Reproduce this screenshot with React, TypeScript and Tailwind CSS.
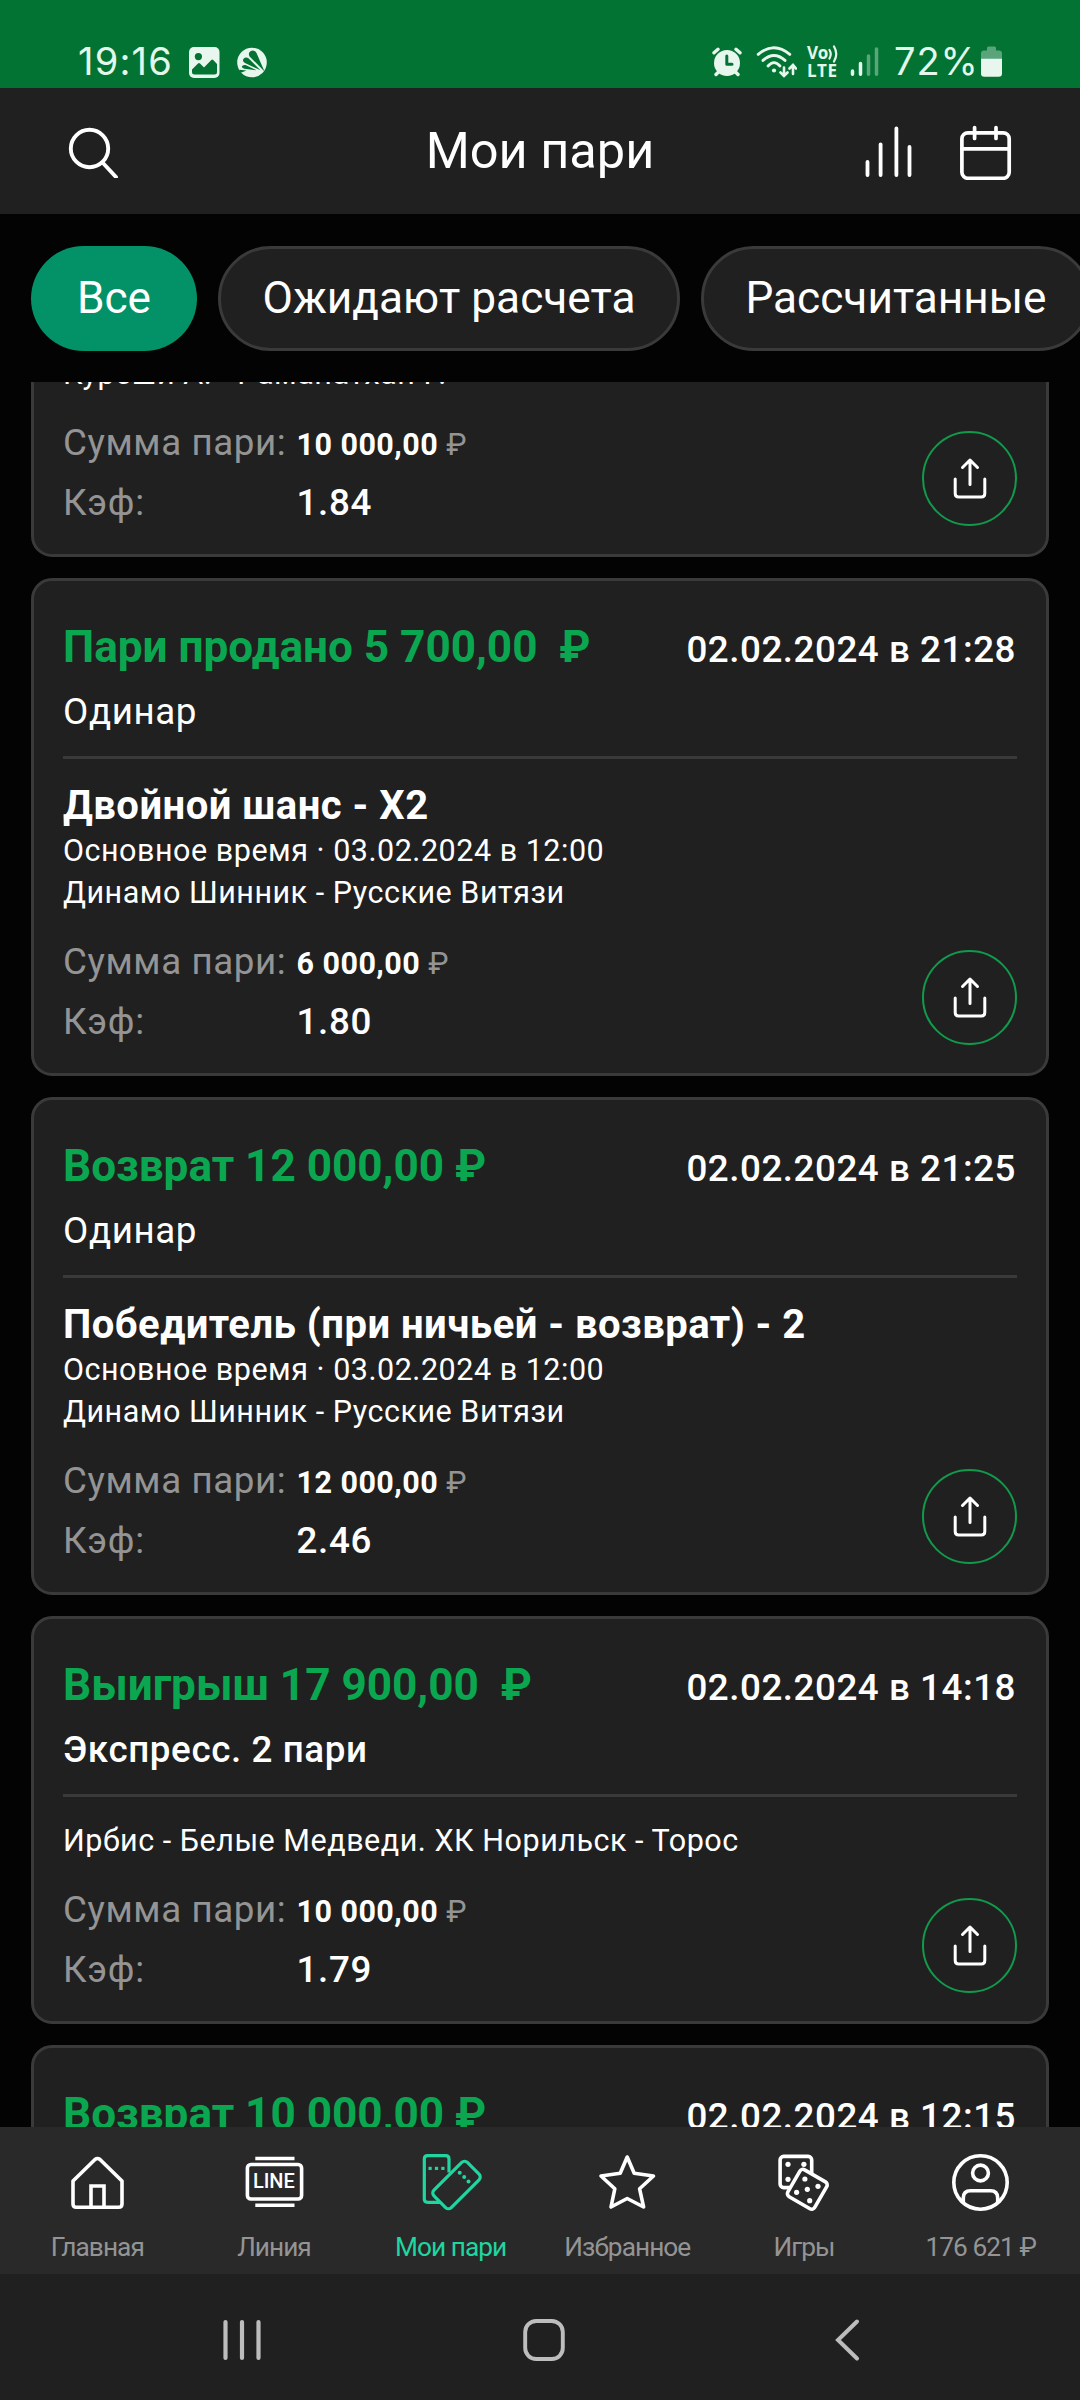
import type { ReactNode } from "react";

type Bet = {
  status?: string;
  date?: string;
  kind?: string;
  kindBold?: boolean;
  title?: string;
  lines: string[];
  sum: string;
  odds: string;
};

const bets: Bet[] = [
  { lines: ["Куреши А. - Раманатхан Р."], sum: "10 000,00", odds: "1.84" },
  {
    status: "Пари продано 5 700,00  ₽",
    date: "02.02.2024 в 21:28",
    kind: "Одинар",
    title: "Двойной шанс - X2",
    lines: ["Основное время · 03.02.2024 в 12:00", "Динамо Шинник - Русские Витязи"],
    sum: "6 000,00",
    odds: "1.80",
  },
  {
    status: "Возврат 12 000,00 ₽",
    date: "02.02.2024 в 21:25",
    kind: "Одинар",
    title: "Победитель (при ничьей - возврат) - 2",
    lines: ["Основное время · 03.02.2024 в 12:00", "Динамо Шинник - Русские Витязи"],
    sum: "12 000,00",
    odds: "2.46",
  },
  {
    status: "Выигрыш 17 900,00  ₽",
    date: "02.02.2024 в 14:18",
    kind: "Экспресс. 2 пари",
    kindBold: true,
    lines: ["Ирбис - Белые Медведи. ХК Норильск - Торос"],
    sum: "10 000,00",
    odds: "1.79",
  },
];

function StatusBar() {
  return (
    <div className="flex h-[88px] shrink-0 items-start bg-[#027333] pt-[46px] pl-[78px] font-['Inter'] text-[38px] leading-[32px] text-[#e3f8ea]">
      <span className="-mt-px w-[111px] tracking-[1.2px]">19:16</span>
      <svg className="h-8 w-[31px]" viewBox="0 0 31 32">
        <rect x="0" y="1" width="30.5" height="31" rx="5" fill="#e8f7ee" />
        <circle cx="9.4" cy="10.6" r="3.6" fill="#027333" />
        <path d="M3 23.5 L9 17.5 Q10 16.6 11 17.5 L15 21.5 L22.3 14 Q23.3 13.2 24.2 14 L28 18 V26 Q28 28.5 25.5 28.5 H5.5 Q3 28.5 3 26Z" fill="#027333" />
      </svg>
      <svg className="ml-[17px] h-8 w-[30px]" viewBox="0 0 30 32">
        <circle cx="15" cy="16.5" r="14.8" fill="#e8f7ee" />
        <g fill="#027333">
          <path d="M27.5 25.5 L19.5 7 Q17.500 3.600 13.800 5 Q10.600 7 12.600 10.400Z" />
          <path d="M23.500 24.300 L11.500 12.200 Q8.500 10.600 6.400 13 Q5 15.600 8 17Z" />
          <path d="M19.500 24.300 L8.500 19 Q5.500 18.600 4.800 20.600 Q5 22.400 7.500 22.700Z" />
          <path d="M9.500 24.400 L2.500 23.800 L1.500 26.500 L4.500 26.500Z" />
        </g>
      </svg>
      <div className="ml-auto flex items-start pr-[78px]">
        <svg className="h-8 w-[30px]" viewBox="0 0 30 32">
          <g stroke="#e8f7ee" strokeWidth="3.4" strokeLinecap="round">
            <path d="M2 6.8 L6 3.3 M28 6.8 L24 3.3 M4 28.5 L7 25.5 M26 28.5 L23 25.5" />
          </g>
          <circle cx="15" cy="17" r="13" fill="#e8f7ee" />
          <path d="M14.8 10 V18.2 H20" fill="none" stroke="#027333" strokeWidth="3" strokeLinecap="round" strokeLinejoin="round" />
        </svg>
        <svg className="ml-[13px] h-8 w-[42px]" viewBox="0 0 42 32">
          <g fill="none" stroke="#e8f7ee" strokeWidth="2.9" strokeLinecap="round">
            <path d="M3.2 8.4 Q19 -5 34.8 8.4" />
            <path d="M8 14.4 Q19 4.4 30 14.4" />
            <path d="M13 20 Q19 13.2 25 20" />
            <path d="M29 21.5 V29.5 M25.5 26.5 L29 30 L32.5 26.5 M38 28 V19.5 M34.5 22.5 L38 19 L41 22.5" strokeWidth="2.6" />
          </g>
          <circle cx="19" cy="24.5" r="2.1" fill="#e8f7ee" />
        </svg>
        <div className="ml-[10px] flex w-[32px] flex-col font-['Open_Sans'] text-[17px] leading-[16px] font-bold text-[#e3f8ea]">
          <div className="flex h-[17px] items-start">
            <span className="-mt-px tracking-[-0.4px]">Vo</span>
            <svg className="-mt-px h-[18px] w-[10px]" viewBox="0 0 10 18">
              <path d="M1.5 5 Q4 9 1.5 13.5 M6 1.5 Q10.5 9 6 16.5" fill="none" stroke="#e8f7ee" strokeWidth="2.2" strokeLinecap="round" />
            </svg>
          </div>
          <span className="tracking-[0.5px]">LTE</span>
        </div>
        <svg className="ml-[11px] h-8 w-[30px]" viewBox="0 0 30 32">
          <g stroke="#e8f7ee" strokeWidth="3.5" strokeLinecap="round">
            <path d="M2.5 25 V28.3 M10.5 17.5 V28.3" />
            <path d="M18.5 10 V28.3 M26.5 3 V28.3" opacity="0.38" />
          </g>
        </svg>
        <span className="-mt-px ml-[14px] w-[87px] tracking-[0.9px]">72%</span>
        <svg className="h-8 w-[21px]" viewBox="0 0 21 32">
          <path d="M6 4.500 V2 Q6 .5 7.500 .5 H13.500 Q15 .5 15 2 V4.500 H18 Q21 4.500 21 7.500 V13 H0 V7.500 Q0 4.500 3 4.500Z" fill="#5aa47c" />
          <path d="M0 12.700 H21 V27.500 Q21 30.800 17.700 30.800 H3.300 Q0 30.800 0 27.500Z" fill="#e8f7ee" />
        </svg>
      </div>
    </div>
  );
}

function Header() {
  return (
    <header className="grid h-[126px] shrink-0 grid-cols-[1fr_auto_1fr] items-center bg-[#202020] pr-[66px] pl-[66px] text-white">
      <svg className="size-[54px]" viewBox="0 0 54 54" fill="none" stroke="currentColor" strokeWidth="3.900" strokeLinecap="round">
        <circle cx="23.500" cy="24.500" r="18.700" />
        <path d="M36.500 38.500 L50 53" />
      </svg>
      <h1 className="text-[50.5px] leading-[60px]">Мои пари</h1>
      <div className="flex items-center justify-end gap-[48px]">
        <svg className="h-[58px] w-[50px]" viewBox="0 0 50 58" stroke="currentColor" strokeWidth="3.800" strokeLinecap="round">
          <path d="M5.500 40 V53 M18.600 22.300 V53 M34.400 6.500 V53 M47.500 25 V53" />
        </svg>
        <svg className="h-[58px] w-[54px]" viewBox="0 0 54 58" fill="none" stroke="currentColor" strokeWidth="3.700" strokeLinecap="round">
          <rect x="1.900" y="10.800" width="47.300" height="45.500" rx="6" />
          <path d="M2 26.800 H49 M14.600 5.500 V16.500 M36 5.500 V16.500" />
        </svg>
      </div>
    </header>
  );
}

function Filters() {
  return (
    <div className="flex h-[168px] shrink-0 gap-[21px] overflow-hidden pt-[32px] pl-[31px] text-[44.2px] text-white">
      <button className="h-[105px] w-[166px] shrink-0 rounded-full bg-[#039267]">Все</button>
      <button className="h-[105px] w-[462px] shrink-0 rounded-full border-[3px] border-[#3a3a3a] bg-[#202020]">Ожидают расчета</button>
      <button className="h-[105px] w-[390px] shrink-0 rounded-full border-[3px] border-[#3a3a3a] bg-[#202020]">Рассчитанные</button>
    </div>
  );
}

function ShareButton() {
  return (
    <button className="-mb-px flex size-[95px] items-center justify-center rounded-full border-[2px] border-[#119a4b]">
      <svg className="size-[44px]" viewBox="26 25.5 44 44" fill="none" stroke="#fff" strokeWidth="3" strokeLinecap="round" strokeLinejoin="round">
        <path d="M33.200 47.500 V62 Q33.200 65.500 36.700 65.500 H59.300 Q62.800 65.500 62.800 62 V47.500 M48 53 V28.500 M40.500 36 L48 28.500 L55.500 36" />
      </svg>
    </button>
  );
}

function CardHead({ status, date }: { status: string; date: string }) {
  return (
    <div className="flex h-[52px] items-baseline justify-between leading-[52px]">
      <h2 className="text-[44.1px] font-bold whitespace-pre text-[#0aa750]">{status}</h2>
      <time className="mr-px text-[36.75px] font-medium tracking-[0.54px]">{date}</time>
    </div>
  );
}

function BetCard({ bet }: { bet: Bet }) {
  return (
    <article className="shrink-0 rounded-[21px] border-[3px] border-[#3a3a3a] bg-[#202020] pt-[40px] pr-[29px] pb-[29px] pl-[29px] text-white">
      {bet.status && bet.date && (
        <>
          <CardHead status={bet.status} date={bet.date} />
          <p className={`mt-[17px] mb-[22px] text-[36.75px] leading-[44px] tracking-[0.6px] ${bet.kindBold ? "font-medium" : "font-normal"}`}>{bet.kind}</p>
          <div className="mb-[23px] h-[3px] bg-[#3a3a3a]" />
        </>
      )}
      {bet.title && <h3 className="text-[40px] leading-[48px] font-bold tracking-[0.48px]">{bet.title}</h3>}
      {bet.lines.map((line) => (
        <p key={line} className="text-[30.5px] leading-[42px] tracking-[0.52px]">{line}</p>
      ))}
      <div className="mt-[25.5px] flex items-end justify-between">
        <dl className="grid grid-cols-[233.5px_auto] grid-rows-[44px_44px] items-baseline gap-y-[16.5px] text-[36.75px] leading-[44px] tracking-[0.7px]">
          <dt className="tracking-[0.58px] text-[#949494]">Сумма пари:</dt>
          <dd className="text-[30.5px] font-bold tracking-[0.45px]">
            {bet.sum} <span className="font-normal text-[#949494]">₽</span>
          </dd>
          <dt className="text-[#949494]">Кэф:</dt>
          <dd className="font-medium">{bet.odds}</dd>
        </dl>
        <ShareButton />
      </div>
    </article>
  );
}

function HomeIcon() {
  return (
    <>
      <path d="M6 29 L28 7.500 Q30.500 5.500 33 7.500 L55 29 V52 Q55 55.300 51.700 55.300 H9.300 Q6 55.300 6 52Z" />
      <path d="M24 55 V34 H37 V55" strokeLinejoin="miter" />
    </>
  );
}

function LineIcon() {
  return (
    <>
      <rect x="3.400" y="12.500" width="54.200" height="34.500" rx="3.500" />
      <path d="M11.300 6.500 H50.500 M11.300 53.200 H50.500" strokeLinecap="butt" />
      <text x="8.900" y="36.300" fontSize="20" fontWeight="500" fill="currentColor" stroke="none">LINE</text>
    </>
  );
}

function TicketsIcon() {
  return (
    <g strokeWidth="3.200">
      <path d="M28 20.500 V7 Q28 3.600 24.600 3.600 H6.700 Q3.300 3.600 3.300 7 V47 Q3.300 50.300 6.700 50.300 H19" strokeLinecap="butt" />
      <rect x="23.250" y="9.350" width="24.500" height="47.300" rx="4" transform="rotate(45 35.500 33)" />
      <g fill="currentColor" stroke="none">
        <rect x="7.500" y="14.800" width="3.200" height="3.200" />
        <rect x="13.900" y="14.800" width="3.200" height="3.200" />
        <rect x="20.300" y="14.800" width="3.200" height="3.200" />
        <circle cx="38.700" cy="20.700" r="2" />
        <circle cx="43.200" cy="25.100" r="2" />
        <circle cx="47.500" cy="29.500" r="2" />
      </g>
    </g>
  );
}

function StarIcon() {
  return <path d="M30.200 5 L37.200 21.300 L56.500 24 L42.600 36.800 L46.600 55 L30.200 46.500 L14 55 L17.800 36.800 L4 24 L23.200 21.300Z" />;
}

function DiceIcon() {
  return (
    <>
      <rect x="6.100" y="4.400" width="31.600" height="31.200" rx="3.500" />
      <circle cx="14" cy="12.300" r="2.600" fill="currentColor" stroke="none" />
      <circle cx="29.900" cy="12.300" r="2.600" fill="currentColor" stroke="none" />
      <circle cx="14" cy="27.300" r="2.600" fill="currentColor" stroke="none" />
      <rect x="17.800" y="21.800" width="31" height="31" rx="3.500" fill="#292929" transform="rotate(30 33.300 37.300)" />
      <g fill="currentColor" stroke="none">
        <circle cx="30.900" cy="27" r="2.600" />
        <circle cx="44" cy="34.300" r="2.600" />
        <circle cx="33.300" cy="37.300" r="2.600" />
        <circle cx="22.600" cy="40.300" r="2.600" />
        <circle cx="35.700" cy="48.700" r="2.600" />
      </g>
    </>
  );
}

function ProfileIcon() {
  return (
    <>
      <circle cx="29.500" cy="30.500" r="26.700" />
      <circle cx="29.500" cy="21" r="7.900" />
      <path d="M12.300 50.500 V46 Q12.300 38.700 19.600 38.700 H39.400 Q46.700 38.700 46.700 46 V50.500" strokeLinecap="butt" />
    </>
  );
}

const tabs: { label: string; icon: ReactNode; active?: boolean }[] = [
  { label: "Главная", icon: <HomeIcon /> },
  { label: "Линия", icon: <LineIcon /> },
  { label: "Мои пари", icon: <TicketsIcon />, active: true },
  { label: "Избранное", icon: <StarIcon /> },
  { label: "Игры", icon: <DiceIcon /> },
  { label: "176 621 ₽", icon: <ProfileIcon /> },
];

function TabBar() {
  return (
    <nav className="grid h-[147px] shrink-0 grid-cols-6 bg-[#292929] pr-[11px] pl-[9px]">
      {tabs.map((tab) => (
        <div key={tab.label} className={`flex flex-col items-center pt-[25px] ${tab.active ? "text-[#1fd6a0]" : "text-[#949494]"}`}>
          <svg
            className={`size-[60px] overflow-visible ${tab.active ? "" : "text-white"}`}
            viewBox="0 0 60 60"
            fill="none"
            stroke="currentColor"
            strokeWidth="3.600"
            strokeLinecap="round"
            strokeLinejoin="round"
          >
            {tab.icon}
          </svg>
          <span className="mt-[19px] text-[26.25px] leading-[32px] tracking-[-0.95px] whitespace-nowrap">{tab.label}</span>
        </div>
      ))}
    </nav>
  );
}

function SystemNav() {
  return (
    <div className="grid h-[126px] shrink-0 grid-cols-3 items-center justify-items-center bg-[#202020] pr-[82px] pl-[91px]">
      <svg className="mt-[6px] size-[48px]" viewBox="0 0 48 48" stroke="#bdbdbd" strokeWidth="4.200" strokeLinecap="round">
        <path d="M7.500 6 V42 M24 6 V42 M40.500 6 V42" />
      </svg>
      <svg className="mt-[6px] size-[48px]" viewBox="0 0 48 48" fill="none" stroke="#bdbdbd" strokeWidth="3.900">
        <rect x="5.200" y="5" width="37.600" height="38" rx="11" />
      </svg>
      <svg className="mt-[6px] size-[48px]" viewBox="0 0 48 48" fill="none" stroke="#bdbdbd" strokeWidth="4" strokeLinecap="round">
        <path d="M34 5.500 L15 24 L34 42.500" />
      </svg>
    </div>
  );
}

export default function App() {
  return (
    <div className="flex h-[2400px] w-[1080px] flex-col overflow-hidden bg-[#030303] font-['Roboto',sans-serif]">
      <StatusBar />
      <Header />
      <Filters />
      <main className="flex-1 overflow-hidden pr-[31px] pl-[31px]">
        <div className="-mt-[72px] flex flex-col gap-[21px]">
          {bets.map((bet) => (
            <BetCard key={bet.date ?? "scrolled"} bet={bet} />
          ))}
          <article className="h-[400px] shrink-0 rounded-[21px] border-[3px] border-[#3a3a3a] bg-[#202020] px-[29px] pt-[40px] text-white">
            <CardHead status="Возврат 10 000,00 ₽" date="02.02.2024 в 12:15" />
          </article>
        </div>
      </main>
      <TabBar />
      <SystemNav />
    </div>
  );
}
